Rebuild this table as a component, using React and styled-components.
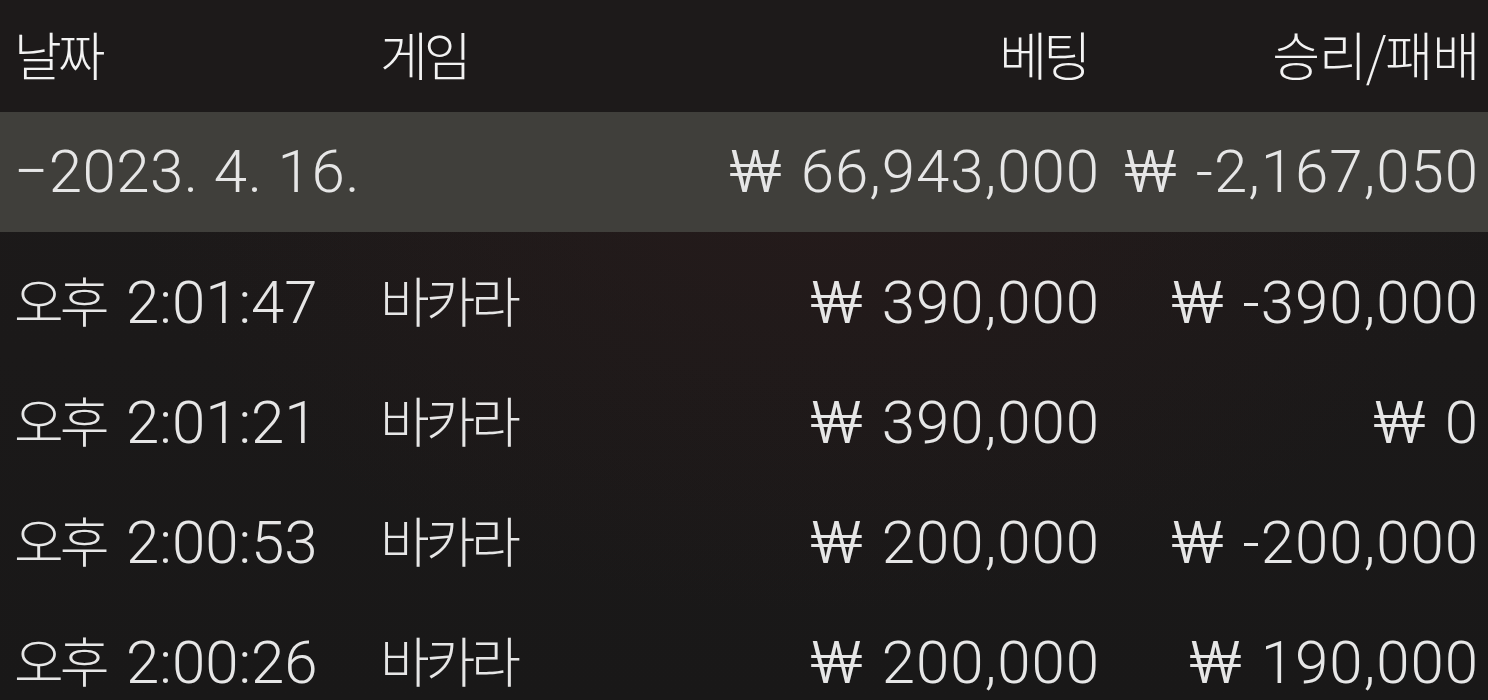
import React from "react";
import styled, { createGlobalStyle } from "styled-components";

const GlobalStyle = createGlobalStyle`
  html, body {
    margin: 0;
    padding: 0;
    background: #1a1818;
  }
  body {
    font-family: Roboto, "Liberation Sans", "Noto Sans CJK KR", sans-serif;
  }
`;

const Page = styled.div`
  width: 1488px;
  height: 700px;
  overflow: hidden;
  background:
    radial-gradient(ellipse at 55% 20%, rgba(60, 30, 30, 0.3), transparent 60%),
    linear-gradient(180deg, #1d1a1a 0%, #191818 100%);
  color: #e6e6e6;
`;

const Row = styled.div`
  display: grid;
  grid-template-columns: 366px 330px 1fr 379px;
  align-items: center;
  padding: 0 9px 0 14px;
  height: ${(p) => p.$h || 120}px;
  background: ${(p) => p.$bg || "transparent"};
`;

const Body = styled.div`
  padding-top: 11px;
`;

const Cell = styled.div`
  font-size: 60px;
  line-height: 1.1;
  font-weight: 300;
  letter-spacing: ${(p) => p.$ls ?? 1}px;
  white-space: nowrap;
  text-align: ${(p) => (p.$right ? "right" : "left")};
  padding-right: ${(p) => p.$pr || 0}px;
`;

const HeadCell = styled(Cell)`
  color: #f2f2f2;
  letter-spacing: 0;
`;

const Ko = styled.span`
  font-family: "Noto Sans CJK KR", sans-serif;
  font-weight: 300;
  line-height: 1.1;
  font-size: ${(p) => p.$size || 54}px;
  letter-spacing: ${(p) => p.$ls ?? -4}px;
  margin-right: ${(p) => p.$mr || 0}px;
`;

const Time = styled.span`
  letter-spacing: 0;
`;

const Won = styled.span`
  display: inline-block;
  margin-right: 26px;
  transform: scaleX(1.16);
  transform-origin: left center;
  letter-spacing: 0;
`;

const rows = [
  { time: "2:01:47", bet: "390,000", result: "-390,000" },
  { time: "2:01:21", bet: "390,000", result: "0" },
  { time: "2:00:53", bet: "200,000", result: "-200,000" },
  { time: "2:00:26", bet: "200,000", result: "190,000" },
];

const Money = ({ v }) => (
  <>
    <Won>₩</Won>
    {v}
  </>
);

export default function App() {
  return (
    <Page>
      <GlobalStyle />
      <Row $h={112} $bg="#1d1a1a">
        <HeadCell><Ko $size={52}>날짜</Ko></HeadCell>
        <HeadCell><Ko $size={52}>게임</Ko></HeadCell>
        <HeadCell $right $pr={13}><Ko $size={52}>베팅</Ko></HeadCell>
        <HeadCell $right $pr={-2}><Ko $size={52} $ls={-1}>승리/패배</Ko></HeadCell>
      </Row>
      <Row $h={120} $bg="#403f3b">
        <Cell $ls={0.5}>−2023. 4. 16.</Cell>
        <Cell />
        <Cell $right><Money v="66,943,000" /></Cell>
        <Cell $right><Money v="-2,167,050" /></Cell>
      </Row>
      <Body>
        {rows.map((r) => (
          <Row key={r.time}>
            <Cell><Ko $mr={5}>오후</Ko> <Time>{r.time}</Time></Cell>
            <Cell><Ko>바카라</Ko></Cell>
            <Cell $right><Money v={r.bet} /></Cell>
            <Cell $right><Money v={r.result} /></Cell>
          </Row>
        ))}
      </Body>
    </Page>
  );
}
